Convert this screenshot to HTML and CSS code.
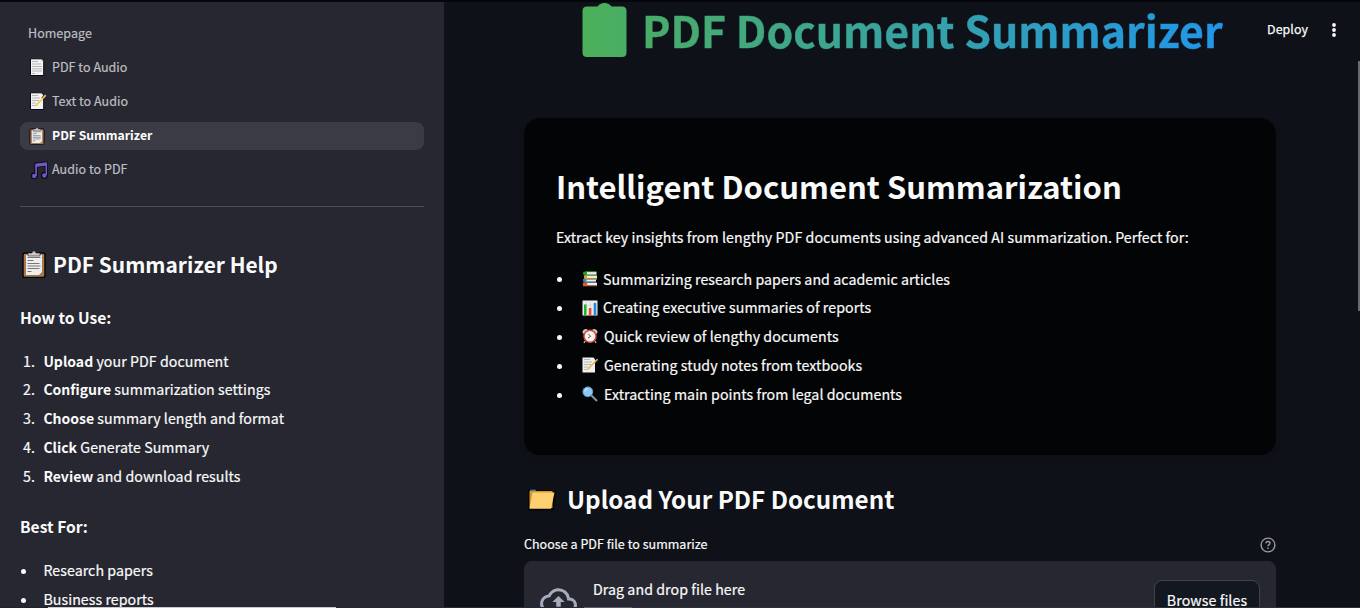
FILE: index.html
```html
<!DOCTYPE html>
<html lang="en">
<head>
<meta charset="utf-8">
<title>PDF Summarizer</title>
<link rel="stylesheet" href="styles.css">
</head>
<body>
<svg class="defs" aria-hidden="true">
  <symbol id="page" viewBox="0 0 18 18"><path d="M1.5.8h11l2.2 2.2v14.500H1.5z" fill="#f3f3f3" stroke="#090a0d" stroke-width="1"/><path d="M12.5 1v2.2h2.2" fill="#bbb"/><path d="M3 3.5h6M3 6h9M3 8.5h10M3 10.8h10M3 13h10M3 15.5h3" stroke="#b5b5b5"/></symbol>
  <symbol id="memo" viewBox="0 0 18 18"><path d="M1.500.8h11l2.200 2.200v14.500H1.500z" fill="#f3f3f3" stroke="#090a0d" stroke-width="1"/><path d="M3 3.500h6M3 6h8M3 8.500h7M3 11h4M3 13.500h3" stroke="#b5b5b5"/><path d="M13.500 6.500 17 3" stroke="#16161a" stroke-width="3"/><path d="M6.500 14 16 4" stroke="#f8c844" stroke-width="1.800"/><path d="m15 5 1.800-1.800" stroke="#e8a0a4" stroke-width="1.800"/></symbol>
  <symbol id="memo-plain" viewBox="0 0 16 16"><path d="M.5.500h10.800L13 2.200v13.300H.5z" fill="#efefef"/><path d="M2 2.500h6M2 5h8M2 7.500h7M2 10h4M2 12.500h3" stroke="#b5b5b5"/><path d="M5.500 12.500 14.800 3" stroke="#e9b949" stroke-width="1.700"/><path d="m14 3.800 1.600-1.600" stroke="#c99ca0" stroke-width="1.600"/></symbol>
  <symbol id="clip" viewBox="0 0 24 28"><rect x="1" y="3" width="22" height="24.500" rx="2" fill="#a87850" stroke="#08080a" stroke-width="1.500"/><path d="M4 5h16v17l-3 3H4z" fill="#eee"/><path d="M6 6V3h4a2 2 0 0 1 4 0h4v3z" fill="#c9c9c9" stroke="#24242a" stroke-width=".6"/><path d="M5.500 7.500h13M5.500 10.500h6M5.500 13.500h12M5.500 16h13M5.500 18.500h12M5.500 21.500h4" stroke="#777" stroke-width="1.100"/></symbol>
  <symbol id="music" viewBox="0 0 18 18"><g stroke="#090a0d" stroke-width="1.200" fill="#7256c6"><path d="M5 15V2.300L17.500.8V14h-2.300V5L7.300 6v9z"/><circle cx="4.200" cy="15" r="2.800"/><circle cx="14.300" cy="14.500" r="2.800"/></g><path d="M5.300 2.700 17.100 1.300V14h-1.500V4.800L6.900 5.800V15H5.300z" fill="#7256c6"/></symbol>
  <symbol id="books" viewBox="0 0 16 16"><path d="M4 .8h10.500v3H4z" fill="#eee"/><path d="M1.200.8H5v3H1.200z" fill="#22a722"/><path d="M3 .7h11.500M3 4h11.500" stroke="#22a722" stroke-width=".7"/><path d="M4 4.500h11v3H4z" fill="#f1ead0"/><path d="M2 4.300h3v3.200h10v.9H3L2 7z" fill="#d7a620"/><path d="M4 8.500h10v2.200H4z" fill="#eee"/><path d="M1 8.100h3.500v2.700H14v.8H2L1 10z" fill="#3288ca"/><path d="M4 11.700h11v2.800H4z" fill="#eee"/><path d="M.8 11.500h4.500v3H15v.7H1z" fill="#d95b2b"/></symbol>
  <symbol id="chart" viewBox="0 0 16 16"><path d="M.5.5h15v15H.5z" fill="#eee"/><path d="M4.500.5v15m4-15v15m4-15v15M.5 5h15M.5 10h15" stroke="#ccc" stroke-width=".5"/><path d="M2 4.500h2.500v11H2z" fill="#18b929"/><path d="M6.800 8h2.600v7.500H6.800z" fill="#eb4b32"/><path d="M11.700 3h2.600v12.500h-2.600z" fill="#238adf"/></symbol>
  <symbol id="clock" viewBox="0 0 16 16"><path d="m3 13-1 2m11-2 1 2" stroke="#aaa" stroke-width="1.500"/><path d="M.5 4.500Q.5 1 4.500 1L6 2 1.500 6zM15.500 4.500Q15.500 1 11.500 1L10 2l4.500 4z" fill="#c7c7c7"/><circle cx="8" cy="8.300" r="6" fill="#f6f6f6" stroke="#e24930" stroke-width="1.500"/><path d="m6.500 6 2.200 2.300L6 10" stroke="#444" fill="none" stroke-width=".9"/></symbol>
  <symbol id="search" viewBox="0 0 16 16"><path d="m9 9 6 6" stroke="#8496a2" stroke-width="2"/><circle cx="5.800" cy="5.800" r="4.900" fill="#8fc8f0" stroke="#5d9bd2"/><path d="M3 5.500A3 3 0 0 1 6 2.700" stroke="#d4efff" fill="none"/></symbol>
  <symbol id="folder" viewBox="0 0 30 23"><path d="M1 2.500 3 .8h6l2 1.200h13v1h5.500L26.500 22.500H1z" fill="#050608"/><path d="M2.500 3h23v17h-23z" fill="#d99a22"/><path d="M3.500 1.600h4.800L9.500 3H3z" fill="#347fae"/><path d="M5.500 4.500h22L24 20.800H2.500z" fill="#ffd071"/></symbol>
</svg>
<div class="app">
  <aside class="sidebar">
    <nav class="nav">
      <a class="nav-item"><span>Homepage</span></a>
      <a class="nav-item"><svg class="nav-icon"><use href="#page"/></svg><span>PDF to Audio</span></a>
      <a class="nav-item"><svg class="nav-icon"><use href="#memo"/></svg><span>Text to Audio</span></a>
      <a class="nav-item active"><svg class="nav-icon"><use href="#clip"/></svg><span>PDF Summarizer</span></a>
      <a class="nav-item"><svg class="nav-icon music"><use href="#music"/></svg><span>Audio to PDF</span></a>
    </nav>
    <h2 class="help-title"><svg class="help-icon"><use href="#clip"/></svg><span>PDF Summarizer Help</span></h2>
    <h3 class="sub">How to Use:</h3>
    <ol class="list steps">
      <li><i>1.</i><span><b>Upload</b> your PDF document</span></li>
      <li><i>2.</i><span><b>Configure</b> summarization settings</span></li>
      <li><i>3.</i><span><b>Choose</b> summary length and format</span></li>
      <li><i>4.</i><span><b>Click</b> Generate Summary</span></li>
      <li><i>5.</i><span><b>Review</b> and download results</span></li>
    </ol>
    <h3 class="sub best">Best For:</h3>
    <ul class="list">
      <li><i class="dot"></i><span>Research papers</span></li>
      <li><i class="dot"></i><span>Business reports</span></li>
    </ul>
  </aside>
  <main class="main">
    <h1 class="title"><svg class="title-icon" viewBox="0 0 45 54"><defs><linearGradient id="g"><stop stop-color="#4caf5a"/><stop offset="1" stop-color="#49ae64"/></linearGradient></defs><path d="M5 3.500h10.500Q18 0 22.500 0T29.500 3.500H40q4.500 0 4.500 4.500v41.500q0 4.500-4.500 4.500H5Q.5 54 .5 49.500V8Q.5 3.500 5 3.500z" fill="url(#g)"/></svg><span class="title-text">PDF Document Summarizer</span></h1>
    <section class="card">
      <h2 class="card-title">Intelligent Document Summarization</h2>
      <p class="intro">Extract key insights from lengthy PDF documents using advanced AI summarization. Perfect for:</p>
      <ul class="list uses">
        <li><i class="dot"></i><svg><use href="#books"/></svg><span>Summarizing research papers and academic articles</span></li>
        <li><i class="dot"></i><svg><use href="#chart"/></svg><span>Creating executive summaries of reports</span></li>
        <li><i class="dot"></i><svg class="wide"><use href="#clock"/></svg><span>Quick review of lengthy documents</span></li>
        <li><i class="dot"></i><svg class="wide"><use href="#memo-plain"/></svg><span>Generating study notes from textbooks</span></li>
        <li><i class="dot"></i><svg class="wide"><use href="#search"/></svg><span>Extracting main points from legal documents</span></li>
      </ul>
    </section>
    <h2 class="upload-title"><svg><use href="#folder"/></svg><span>Upload Your PDF Document</span></h2>
    <div class="label"><span>Choose a PDF file to summarize</span><svg viewBox="0 0 16 16"><circle cx="8" cy="8" r="6.900"/><path d="M6 6.300Q6 4.500 8 4.500t2 1.700Q10 7.300 8.800 7.900 8 8.300 8 9.300M8 10.600v1.400"/></svg></div>
    <div class="dropzone">
      <svg class="cloud" viewBox="0 0 24 24"><path d="M19.350 10.040A7.490 7.490 0 0 0 12 4C9.110 4 6.600 5.640 5.350 8.040A5.994 5.994 0 0 0 0 14c0 3.310 2.690 6 6 6h13c2.760 0 5-2.240 5-5 0-2.640-2.050-4.780-4.650-4.960zM19 18H6c-2.210 0-4-1.790-4-4 0-2.050 1.530-3.760 3.560-3.970l1.070-.11.5-.95A5.469 5.469 0 0 1 12 6c2.620 0 4.880 1.860 5.390 4.430l.3 1.500 1.530.11A2.980 2.980 0 0 1 22 15c0 1.650-1.350 3-3 3zM8 13h2.550v3h2.900v-3H16l-4-4z"/></svg>
      <span class="drop-text">Drag and drop file here</span>
      <button class="browse">Browse files</button>
    </div>
  </main>
</div>
<div class="toolbar"><span>Deploy</span><svg viewBox="0 0 6 14"><circle cx="3" cy="2" r="1.900"/><circle cx="3" cy="7" r="1.900"/><circle cx="3" cy="12" r="1.900"/></svg></div>
<div class="top-edge"></div>
<div class="scroll-thumb"></div>
<div class="bottom-edge"></div>
</body>
</html>
```
FILE: styles.css
```css
* { box-sizing: border-box; }
body { margin: 0; width: 1360px; height: 608px; overflow: hidden; background: #0e1117; color: #fafafa; font: 14.2px/28.8px "Noto Sans CJK SC", "Noto Sans", sans-serif; letter-spacing: .065px; -webkit-text-stroke: .2px; }
h1, h2, h3, p, ul, ol { margin: 0; padding: 0; font-weight: 600; }
h1, h2, h3, b { letter-spacing: 0; -webkit-text-stroke: 0; }
p, ul, ol { font-weight: 400; }
span, h2, h3, p { white-space: nowrap; }
.defs { position: absolute; width: 0; height: 0; }
.app { display: flex; height: 608px; overflow: hidden; }
.sidebar { width: 444px; flex: none; padding: 20px 20px 0; background: #262730; overflow: hidden; }
.nav { display: flex; flex-direction: column; gap: 6px; height: 187px; border-bottom: 1px solid #4c4d55; }
.nav-item { display: flex; align-items: flex-start; height: 28px; padding-left: 8px; border-radius: 8px; font-size: 12.5px; line-height: 26px; letter-spacing: .04px; color: #bebec2; }
.nav-item.active { background: #3b3b46; color: #fff; font-size: 12.2px; font-weight: 700; letter-spacing: 0; -webkit-text-stroke: 0; }
.nav-icon { width: 18px; height: 18px; margin: 4px 5px 0 1px; }
.active .nav-icon { margin: 4.500px 6px 0 0; }
.nav-icon.music { margin: 4.500px 4.500px 0 1.500px; }
.help-title { display: flex; align-items: center; height: 36px; margin-top: 39px; font-size: 20.9px; }
.help-icon { width: 24px; height: 28px; margin: 0 7px 0 2px; }
.sub { height: 24px; margin-top: 23px; font-size: 15.6px; line-height: 24px; }
.list { list-style: none; }
.list li { display: flex; align-items: center; height: 28.8px; }
.list i { width: 23.4px; padding-left: 3px; font-style: normal; flex: none; }
.list .dot { padding: 2px 0 0; }
.dot::before { content: ""; display: block; width: 5px; height: 5px; margin-left: 1px; border-radius: 50%; background: #fafafa; }
.list b { font-size: 14px; font-weight: 600; }
.steps { margin-top: 17.5px; }
.best { margin: 23.500px 0 18px; }
.main { flex: 1; padding: 3px 84px 0 80px; }
.title { display: flex; align-items: flex-start; height: 115px; padding-left: 58px; }
.title-icon { width: 45px; height: 54px; margin-right: 15px; }
.title-text { margin-top: -3px; font-size: 42.8px; line-height: 58px; font-weight: 700; background: linear-gradient(90deg, #49ad67, #2196ea); color: transparent; background-clip: text; -webkit-background-clip: text; -webkit-text-stroke: .4px transparent; }
.card { height: 337px; padding: 43px 32px 0; border-radius: 16px; background: #030406; box-shadow: 0 4px 6px #0002; }
.card-title { height: 50px; font-size: 31px; line-height: 50px; }
.intro { height: 29px; margin: 12px 0 12.5px; }
.uses i { width: 26px; }
.uses svg { width: 16px; height: 16px; margin-right: 5px; }
.uses svg.wide { margin-right: 6px; }
.upload-title { display: flex; align-items: center; height: 40px; margin-top: 24px; font-size: 24.2px; }
.upload-title svg { width: 30px; height: 23px; margin: 0 10px 0 3px; }
.label { display: flex; justify-content: space-between; align-items: center; height: 20px; margin: 16px 0 6px; font-size: 12.5px; letter-spacing: .03px; }
.label span { margin-top: -2px; }
.label svg { width: 16px; height: 16px; fill: none; stroke: #9b9ca1; stroke-width: 1.4; }
.dropzone { display: flex; align-items: flex-start; height: 76px; padding: 19px 16px; border-radius: 8px; background: #262730; }
.cloud { width: 37px; height: 37px; margin: 2px 16px 0 0; fill: #a8abbd; }
.drop-text { margin-top: -1px; line-height: 20px; }
.browse { width: 106px; height: 40px; margin-left: auto; padding: 0; border: 1px solid #41434c; border-radius: 8px; background: #131720; color: #fafafa; font: 14.2px/38px "Noto Sans CJK SC", sans-serif; letter-spacing: .08px; -webkit-text-stroke: .2px; }
.toolbar { position: absolute; top: 16px; right: 23px; display: flex; align-items: center; gap: 23px; height: 28px; font-size: 12.4px; -webkit-text-stroke: .25px; }
.toolbar span { margin-top: -2px; }
.toolbar svg { width: 6px; height: 14px; fill: #fafafa; }
.top-edge { position: absolute; inset: 0 0 auto; height: 2px; background: #050609; }
.scroll-thumb { position: absolute; top: 61px; right: 0; width: 2px; height: 250px; background: #686a6d; }
.bottom-edge { position: absolute; top: 607px; left: 0; width: 1360px; height: 1px; background: linear-gradient(90deg, #1d2630 48px, #c8c9cb 48px 336px, #202c39 336px 584px, #555d69 584px 632px, #29313a 632px); }
```
